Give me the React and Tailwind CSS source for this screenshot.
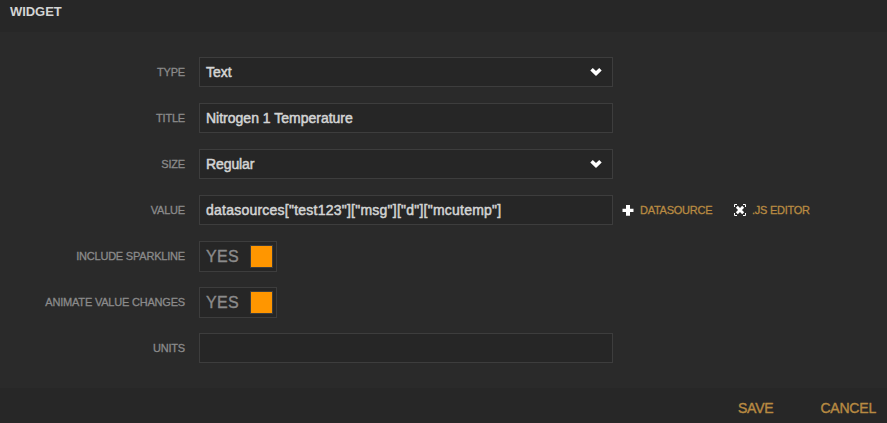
import React from "react";

const fieldText =
  "text-[14px] leading-[28px] text-[#d3d4d4] [-webkit-text-stroke:0.5px_#d3d4d4] whitespace-pre";

function Chevron() {
  return (
    <svg className="mr-[10px] h-[8px] w-[12px]" viewBox="0 0 12 8">
      <path d="M0.3 2.5 2.8 0.1 6 3.1 9.2 0.1 11.7 2.5 6 8Z" fill="#fff" />
    </svg>
  );
}

function Field({ value, tracking = "", select }) {
  return (
    <div className="flex h-[30px] w-[414px] items-center justify-between border border-[#3d3d3d] bg-[#262626] pl-[6px]">
      <span className={`${fieldText} ${tracking}`}>{value}</span>
      {select && <Chevron />}
    </div>
  );
}

function Toggle() {
  return (
    <div className="flex h-[31px] w-[78px] items-center justify-between border border-[#3d3d3d] bg-[#262626] pr-[3px] pl-[6px]">
      <span className="text-[16px] leading-[29px] tracking-[0.3px] text-[#8b8b8b] [-webkit-text-stroke:0.35px_#8b8b8b]">YES</span>
      <span className="h-[23px] w-[23px] border border-[#3d3d3d] bg-[#ff9600]" />
    </div>
  );
}

function Row({ label, children }) {
  return (
    <div className="flex h-[46px] items-start">
      <div className="mr-[14px] w-[185px] text-right text-[11px] leading-[30px] tracking-[-0.2px] text-[#8b8b8b] [-webkit-text-stroke:0.3px_#8b8b8b]">
        {label}
      </div>
      {children}
    </div>
  );
}

function Actions() {
  return (
    <div className="flex h-[30px] items-center text-[11px] tracking-[-0.25px] text-[#b88a42] [-webkit-text-stroke:0.3px_#b88a42]">
      <svg className="ml-[9px] h-[12px] w-[12px]" viewBox="0 0 12 12">
        <path d="M4 1h4v3.7h3.5v3.3h-3.5v3.7h-4v-3.7h-3.5v-3.3h3.5z" fill="#fff" />
      </svg>
      <span className="ml-[6px] w-[73px]">DATASOURCE</span>
      <svg className="ml-[21px] h-[12px] w-[12px]" viewBox="0 0 12 12">
        <path
          d="M0.5 3v-2.5h2.5M9 0.5h2.5v2.5M11.5 9v2.5h-2.5M3 11.5h-2.5v-2.5"
          fill="none"
          stroke="#fff"
        />
        <path d="M2.8 2.8 9.2 9.2M9.2 2.8 2.8 9.2" stroke="#fff" strokeWidth="2.8" />
      </svg>
      <span className="ml-[6px]">.JS EDITOR</span>
    </div>
  );
}

export default function App() {
  return (
    <div className="flex h-[423px] w-[887px] flex-col overflow-hidden bg-[#2a2a2a] font-['Liberation_Sans',Arial,sans-serif]">
      <header className="h-[32px] bg-[#272727] pl-[10px] text-[13px] leading-[24px] font-bold tracking-[-0.05px] text-[#d3d4d4]">
        WIDGET
      </header>
      <main className="h-[356px] pt-[25px]">
        <Row label="TYPE">
          <Field value="Text" select />
        </Row>
        <Row label="TITLE">
          <Field value="Nitrogen 1 Temperature" />
        </Row>
        <Row label="SIZE">
          <Field value="Regular" tracking="tracking-[-0.1px]" select />
        </Row>
        <Row label="VALUE">
          <Field
            value={'datasources["test123"]["msg"]["d"]["mcutemp"]'}
            tracking="tracking-[0.235px]"
          />
          <Actions />
        </Row>
        <Row label="INCLUDE SPARKLINE">
          <Toggle />
        </Row>
        <Row label="ANIMATE VALUE CHANGES">
          <Toggle />
        </Row>
        <Row label="UNITS">
          <Field value="" />
        </Row>
      </main>
      <footer className="flex h-[35px] justify-end bg-[#272727] pr-[11px] text-[14px] leading-[40px] tracking-[-0.2px] text-[#b88a42] [-webkit-text-stroke:0.4px_#b88a42]">
        <span className="mr-[47px]">SAVE</span>
        <span>CANCEL</span>
      </footer>
    </div>
  );
}
